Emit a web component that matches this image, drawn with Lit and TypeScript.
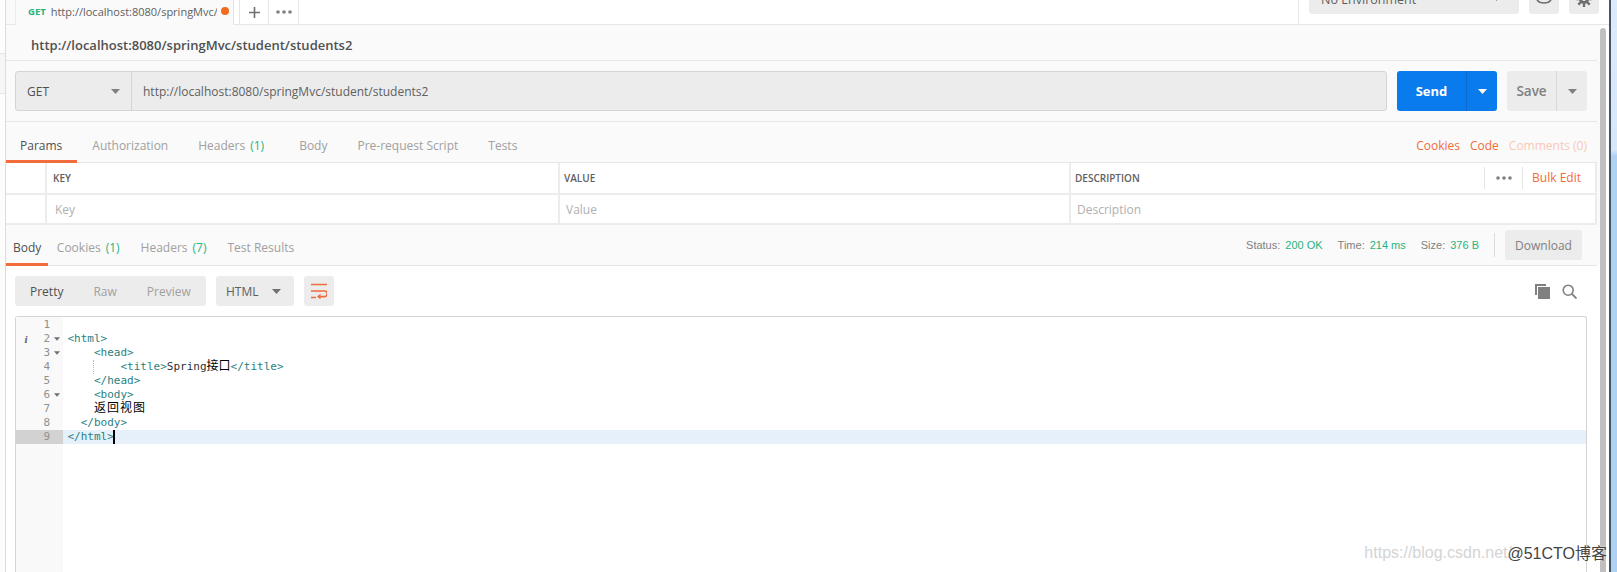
import { LitElement, html, css } from "lit";
import { customElement } from "lit/decorators.js";

const caret = (cls = "") => html`<svg class="caret ${cls}" width="9" height="5" viewBox="0 0 9 5"><path d="M0 0h9L4.5 5z" fill="currentColor"/></svg>`;

const dots = html`<svg width="16" height="4" viewBox="0 0 16 4"><g fill="#808080"><circle cx="2" cy="2" r="1.8"/><circle cx="8" cy="2" r="1.8"/><circle cx="14" cy="2" r="1.8"/></g></svg>`;

type Seg = { t: string; c?: string };
const LINES: Seg[][] = [
  [],
  [{ t: "<html>" }],
  [{ t: "    <head>" }],
  [{ t: "        <title>" }, { t: "Spring", c: "txt" }, { t: "接口", c: "cjk" }, { t: "</title>" }],
  [{ t: "    </head>" }],
  [{ t: "    <body>" }],
  [{ t: "    " }, { t: "返回视图", c: "cjk wide" }],
  [{ t: "  </body>" }],
  [{ t: "</html>" }],
];

@customElement("app-root")
export class AppRoot extends LitElement {
  static styles = css`
    :host {
      display: flex;
      position: relative;
      width: 1617px;
      height: 572px;
      overflow: hidden;
      background: #fff;
      font-family: "Open Sans", "Noto Sans CJK SC", sans-serif;
      font-size: 12px;
      color: #505050;
    }
    .strip { width: 5px; border-right: 1px solid #dcdcdc; background: #fdfdfd; flex: none; display: flex; flex-direction: column; }
    .strip div { border-bottom: 1px solid #e6e6e6; flex: none; }
    .strip .a { height: 53px; }
    .strip .b { height: 39px; background: #f6f6f6; }
    .main { width: 1603px; flex: none; display: flex; flex-direction: column; }
    .frame { flex: none; width: 8px; border-left: 2px solid #46566a; box-sizing: border-box; background: linear-gradient(#dcebfa 0, #d6e7f8 150px, #aed0f1 156px, #aed0f1 100%); }

    .topbar { height: 24px; flex: none; display: flex; border-bottom: 1px solid #e6e6e6; background: #fff; }
    .topbar .pad { width: 9px; background: #fafafa; }
    .reqtab { width: 219px; box-sizing: border-box; height: 25px; display: flex; align-items: center; padding: 0 0 3px 12px; border-left: 1px solid #ececec; border-right: 1px solid #e6e6e6; background: #fafafa; }
    .reqtab .m { font-size: 9.5px; font-weight: 700; color: #26b47f; margin-right: 5px; }
    .reqtab .u { font-size: 11px; color: #606060; width: 166px; overflow: hidden; white-space: nowrap; }
    .reqtab .dot { width: 8px; height: 8px; border-radius: 50%; background: #f26b21; margin-left: 4px; }
    .ico { display: flex; align-items: center; justify-content: center; height: 24px; border-right: 1px solid #e6e6e6; }
    .gap6 { width: 5px; border-right: 1px solid #e6e6e6; }
    .plus { width: 28px; }
    .more { width: 29px; }
    .spacer { flex: 1; }
    .envsep { width: 10px; border-left: 1px solid #e6e6e6; }
    .env { width: 210px; height: 14px; margin-right: 10px; border-radius: 0 0 3px 3px; background: #ececec; box-sizing: border-box; padding: 0 12px; display: flex; justify-content: space-between; align-items: flex-end; color: #606060; font-size: 12.5px; overflow: hidden; }
    .env span { line-height: 14px; margin-bottom: 7px; white-space: nowrap; }
    .env .caret { color: #808080; margin: 0 6px 13px 0; }
    .sq { width: 30px; height: 14px; margin-right: 10px; border-radius: 0 0 3px 3px; background: #ececec; display: flex; justify-content: center; align-items: flex-end; overflow: hidden; }
    .eye { margin-bottom: 7px; }
    .gear { margin-bottom: 7px; }

    .work { flex: 1; display: flex; min-height: 0; }
    .content { width: 1591px; flex: none; display: flex; flex-direction: column; background: #fff; }
    .sideband { width: 3px; flex: none; background: linear-gradient(#fafafa 0, #fafafa 240px, #fff 240px); }
    .thumb { width: 6px; flex: none; margin-top: 3px; background: #c0c0c0; border-radius: 3px 3px 0 0; }
    .tail { flex: 1; background: #fff; }

    .name { height: 36px; box-sizing: border-box; flex: none; background: #fafafa; border-bottom: 1px solid #e6e6e6; padding: 5px 0 0 25px; display: flex; align-items: center; font-weight: 600; font-size: 13px; color: #505050; }
    .urlrow { flex: none; background: #fafafa; border-bottom: 1px solid #e6e6e6; padding: 10px 10px 10px 9px; box-sizing: border-box; height: 61px; display: flex; }
    .urlbox { width: 1372px; height: 40px; box-sizing: border-box; border: 1px solid #d4d4d4; border-radius: 3px; background: #ececec; display: flex; align-items: center; }
    .method { width: 116px; box-sizing: border-box; height: 100%; border-right: 1px solid #d4d4d4; padding: 0 11px 0 11px; display: flex; align-items: center; justify-content: space-between; color: #505050; font-size: 12px; }
    .method .caret { color: #808080; }
    .urlbox .u { padding-left: 11px; font-size: 12px; color: #606060; }
    .send { margin-left: 10px; width: 100px; height: 40px; border-radius: 3px; background: #097bed; color: #fff; display: flex; font-weight: 700; font-size: 13px; }
    .send .l { width: 70px; display: flex; align-items: center; justify-content: center; border-right: 1px solid #0a6ad0; box-sizing: border-box; }
    .send .r, .save .r { flex: 1; display: flex; align-items: center; justify-content: center; }
    .save { margin-left: 10px; width: 80px; height: 40px; border-radius: 3px; background: #ececec; color: #808080; display: flex; font-weight: 600; font-size: 13.5px; }
    .save .l { width: 50px; display: flex; align-items: center; justify-content: center; border-right: 1px solid #d8d8d8; box-sizing: border-box; }

    .tabs { height: 41px; box-sizing: border-box; flex: none; background: #fafafa; border-bottom: 1px solid #e6e6e6; display: flex; align-items: stretch; }
    .tab { padding: 8px 15px 0; display: flex; align-items: center; color: #a0a0a0; font-size: 12px; white-space: nowrap; border-bottom: 3px solid transparent; margin-bottom: -1px; }
    .tab.on { color: #505050; border-bottom-color: #f26b3a; padding-left: 14px; }
    .tab.hd { margin-right: 5px; }
    .tab b { font-weight: 400; color: #26b47f; margin-left: 5px; }
    .links { margin-left: auto; display: flex; align-items: center; padding: 6px 10px 0 0; gap: 10px; color: #f26b3a; font-size: 12px; }
    .links .off { color: #f9c9b5; }

    .tbl { flex: none; display: grid; grid-template-columns: 39px 2px 511px 2px 509px 2px 1fr; background: #fff; border-right: 2px solid #ececec; }
    .tbl > div { display: flex; align-items: center; padding-left: 6px; white-space: nowrap; height: 30px; border-bottom: 2px solid #ececec; box-sizing: content-box; }
    .tbl .sep { padding: 0; background: #ececec; }
    .tbl .gut { padding: 0; }
    .tbl .h { font-size: 10px; font-weight: 600; color: #606060; }
    .tbl .h.t { padding-left: 4px; }
    .tbl .ph { color: #b0b0b0; font-size: 12px; height: 28px; padding-left: 8px; }
    .tbl .ph.t { padding-left: 6px; }
    .tbl .sep.low, .tbl .gut.low { height: 28px; }
    .tbl .last { justify-content: space-between; padding-right: 0; }
    .bulk { display: flex; align-items: center; height: 22px; }
    .bulk .d { height: 100%; border-left: 1px solid #e4e4e4; width: 37px; display: flex; align-items: center; justify-content: center; }
    .bulk .e { height: 100%; border-left: 1px solid #e4e4e4; padding: 0 14px 0 9px; color: #f26b3a; font-size: 12px; line-height: 22px; font-weight: 400; }

    .rtabs { height: 41px; box-sizing: border-box; flex: none; background: #fafafa; border-bottom: 1px solid #e6e6e6; display: flex; }
    .rtabs .tab { padding: 7px 7.5px 0; margin-right: 6px; }
    .rtabs .tab.on { padding-right: 7px; padding-left: 7px; margin-right: 1px; }
    .stats { margin-left: auto; display: flex; align-items: center; font-family: "Liberation Sans", sans-serif; font-size: 11px; color: #808080; padding: 0 15px 0 0; }
    .stats i { font-style: normal; color: #26b47f; margin: 0 15px 0 5px; }
    .stats .rule { width: 1px; height: 24px; background: #dcdcdc; margin: 0 10px 0 0; }
    .dl { width: 77px; height: 30px; border-radius: 3px; background: #ececec; display: flex; align-items: center; justify-content: center; color: #808080; font-family: "Open Sans", sans-serif; font-size: 12px; }

    .tools { flex: none; height: 30px; padding: 10px 10px 10px 9px; display: flex; gap: 10px; align-items: center; }
    .group { height: 30px; border-radius: 3px; background: #ececec; display: flex; align-items: center; color: #a0a0a0; font-size: 12px; }
    .g1 { width: 191px; padding-left: 15px; gap: 30px; box-sizing: border-box; }
    .g1 .on { color: #505050; }
    .g2 { width: 78px; box-sizing: border-box; padding: 0 13px 0 10px; justify-content: space-between; color: #606060; }
    .g2 .caret { color: #707070; }
    .g3 { width: 30px; justify-content: center; }
    .rico { margin-left: auto; display: flex; gap: 12px; align-items: center; padding-right: 10px; }

    .editor { flex: 1; margin: 0 10px 0 9px; border: 1px solid #d4d4d4; border-bottom: 0; border-radius: 3px 3px 0 0; display: flex; min-height: 0; font-family: "DejaVu Sans Mono", monospace; font-size: 11px; }
    .gutter { width: 47px; flex: none; background: #f9f9f9; padding-top: 1px; }
    .gl { height: 14px; line-height: 14px; display: grid; grid-template-columns: 20px 14px 13px; color: #909090; }
    .gl.act { background: #d2d2d2; }
    .gl .i { text-align: center; font-family: "Liberation Serif", serif; font-style: italic; font-weight: 700; color: #606060; }
    .gl .n { text-align: right; }
    .gl .f { display: flex; align-items: center; justify-content: center; }
    .gl .f .caret { color: #707070; width: 6px; height: 4px; margin-left: 1px; }
    .code { flex: 1; padding-top: 1px; }
    .cl { height: 14px; line-height: 14px; padding-left: 4.5px; white-space: pre; color: #2a7f7f; position: relative; }
    .cl.act { background: #e6f0fb; }
    .cl .txt { color: #303030; }
    .cl .cjk { color: #000; font-family: "Noto Sans CJK SC", sans-serif; font-size: 12px; line-height: 0; }
    .cl .wide { letter-spacing: 1px; }
    .cursor { display: inline-block; width: 2px; height: 14px; background: #000; vertical-align: top; margin-left: -1px; }
    .guide { position: absolute; left: 30px; top: 0; height: 14px; border-left: 1px dotted #bbb; }

    .wm1, .wm2 { position: absolute; white-space: nowrap; pointer-events: none; }
    .wm1 { right: 105px; bottom: 10px; font-family: "Liberation Sans", sans-serif; font-size: 16px; color: #d4d4d4; }
    .wm2 { right: 10px; bottom: 8px; font-family: "Liberation Sans", "Noto Sans CJK SC", sans-serif; font-size: 16px; color: #444; text-shadow: 0 0 2px #fff; }
  `;

  render() {
    return html`
      <div class="strip"><div class="a"></div><div class="b"></div></div>
      <div class="main">
        <div class="topbar">
          <div class="pad"></div>
          <div class="reqtab"><span class="m">GET</span><span class="u">http://localhost:8080/springMvc/</span><span class="dot"></span></div>
          <div class="gap6"></div>
          <div class="ico plus"><svg width="13" height="13" viewBox="0 0 13 13"><path d="M6.5 1v11M1 6.5h11" stroke="#707070" stroke-width="1.6" fill="none"/></svg></div>
          <div class="ico more">${dots}</div>
          <div class="spacer"></div>
          <div class="envsep"></div>
          <div class="env"><span>No Environment</span>${caret()}</div>
          <div class="sq"><svg class="eye" width="16" height="10" viewBox="0 0 16 10"><path d="M1 3c3 4 11 4 14 0" fill="none" stroke="#707070" stroke-width="1.6"/><circle cx="8" cy="0" r="3" fill="#707070"/></svg></div>
          <div class="sq"><svg class="gear" width="16" height="16" viewBox="0 0 16 16"><circle cx="8" cy="8" r="5" fill="#707070"/><g stroke="#707070" stroke-width="2.4"><path d="M8 0v16M0 8h16M2.3 2.3l11.4 11.4M13.7 2.3L2.3 13.7"/></g><circle cx="8" cy="8" r="2" fill="#ececec"/></svg></div>
        </div>
        <div class="work">
          <div class="content">
            <div class="name">http://localhost:8080/springMvc/student/students2</div>
            <div class="urlrow">
              <div class="urlbox">
                <div class="method"><span>GET</span>${caret()}</div>
                <div class="u">http://localhost:8080/springMvc/student/students2</div>
              </div>
              <div class="send"><div class="l">Send</div><div class="r">${caret()}</div></div>
              <div class="save"><div class="l">Save</div><div class="r">${caret()}</div></div>
            </div>
            <div class="tabs">
              <div class="tab on">Params</div>
              <div class="tab">Authorization</div>
              <div class="tab hd">Headers<b>(1)</b></div>
              <div class="tab">Body</div>
              <div class="tab">Pre-request Script</div>
              <div class="tab">Tests</div>
              <div class="links"><span>Cookies</span><span>Code</span><span class="off">Comments (0)</span></div>
            </div>
            <div class="tbl">
              <div class="gut"></div><div class="sep"></div>
              <div class="h">KEY</div><div class="sep"></div>
              <div class="h t">VALUE</div><div class="sep"></div>
              <div class="h t last"><span>DESCRIPTION</span><div class="bulk"><div class="d">${dots}</div><div class="e">Bulk Edit</div></div></div>
              <div class="gut low"></div><div class="sep low"></div>
              <div class="ph">Key</div><div class="sep low"></div>
              <div class="ph t">Value</div><div class="sep low"></div>
              <div class="ph t">Description</div>
            </div>
            <div class="rtabs">
              <div class="tab on">Body</div>
              <div class="tab">Cookies<b>(1)</b></div>
              <div class="tab">Headers<b>(7)</b></div>
              <div class="tab">Test Results</div>
              <div class="stats">
                <span>Status:</span><i>200 OK</i><span>Time:</span><i>214 ms</i><span>Size:</span><i>376 B</i>
                <div class="rule"></div>
                <div class="dl">Download</div>
              </div>
            </div>
            <div class="tools">
              <div class="group g1"><span class="on">Pretty</span><span>Raw</span><span>Preview</span></div>
              <div class="group g2"><span>HTML</span>${caret()}</div>
              <div class="group g3"><svg width="16" height="16" viewBox="0 0 16 16"><path d="M0 1.5h16M0 8h13.5a2.6 2.6 0 0 1 0 5.6H8M0 14.5h5" fill="none" stroke="#f26b3a" stroke-width="1.7"/><path d="M9.5 10.8v5.6L6 13.6z" fill="#f26b3a"/></svg></div>
              <div class="rico">
                <svg width="15" height="15" viewBox="0 0 15 15"><path d="M0 0h11v2H2v9H0z" fill="#808080"/><rect x="3" y="3" width="12" height="12" fill="#808080"/></svg>
                <svg width="15" height="15" viewBox="0 0 15 15"><circle cx="6.2" cy="6.2" r="5" fill="none" stroke="#808080" stroke-width="1.6"/><path d="M10 10l4.5 4.5" stroke="#808080" stroke-width="1.8"/></svg>
              </div>
            </div>
            <div class="editor">
              <div class="gutter">
                ${LINES.map((_, i) => html`<div class="gl ${i === 8 ? "act" : ""}">
                  <span class="i">${i === 1 ? "i" : ""}</span>
                  <span class="n">${i + 1}</span>
                  <span class="f">${i === 1 || i === 2 || i === 5 ? caret() : ""}</span>
                </div>`)}
              </div>
              <div class="code">
                ${LINES.map((segs, i) => html`<div class="cl ${i === 8 ? "act" : ""}">${i === 3 ? html`<span class="guide"></span>` : ""}${segs.map((s) => html`<span class=${s.c ?? ""}>${s.t}</span>`)}${i === 8 ? html`<span class="cursor"></span>` : ""}</div>`)}
              </div>
            </div>
          </div>
          <div class="sideband"></div>
          <div class="thumb"></div>
          <div class="tail"></div>
        </div>
      </div>
      <div class="frame"></div>
      <div class="wm1">https://blog.csdn.net/</div>
      <div class="wm2">@51CTO博客</div>
    `;
  }
}
